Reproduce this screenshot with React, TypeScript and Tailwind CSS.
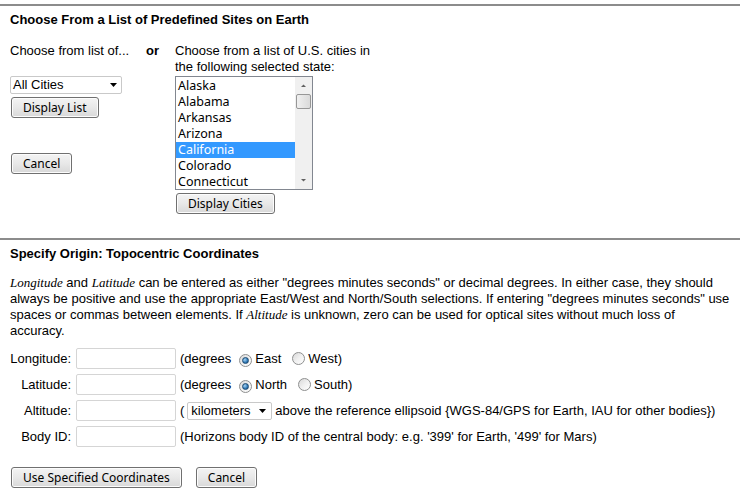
import { useState } from "react";

const states = [
  "Alaska",
  "Alabama",
  "Arkansas",
  "Arizona",
  "California",
  "Colorado",
  "Connecticut",
];

function Button({ label, className = "" }: { label: string; className?: string }) {
  return (
    <button
      type="button"
      className={`h-[21px] rounded-[3px] border border-[#707070] bg-gradient-to-b from-[#f4f4f4] via-[#e8e8e8] to-[#d8d8d8] px-[11px] font-['Noto_Sans',sans-serif] text-[12px] leading-[16px] text-black shadow-[inset_0_0_0_1px_#fcfcfc] ${className}`}
    >
      {label}
    </button>
  );
}

function Radio({ checked }: { checked?: boolean }) {
  return (
    <span className="mx-[3px] inline-flex h-[13px] w-[13px] items-center justify-center rounded-full border border-[#8e8f8f] bg-gradient-to-br from-[#d8d8d8] via-[#f0f0f0] to-[#ffffff] align-[-2px]">
      {checked && (
        <span className="h-[7px] w-[7px] rounded-full border border-[#1c4a72] bg-[radial-gradient(circle_at_35%_35%,#a6d3f5,#2f78b4_60%,#1d4d7a)]" />
      )}
    </span>
  );
}

function TextBox() {
  return (
    <input
      type="text"
      className="h-[21px] w-[100px] rounded-[2px] border border-[#d5d5d5] bg-white px-1 text-[13px] outline-none"
    />
  );
}

function DropArrow() {
  return (
    <svg width="8" height="4" viewBox="0 0 8 4" className="shrink-0">
      <path d="M0 0h7L3.5 4z" fill="#000" />
    </svg>
  );
}

export default function App() {
  const [selected, setSelected] = useState("California");

  return (
    <div className="min-h-[504px] w-[747px] bg-white pt-[4px] font-['Liberation_Sans',Arial,sans-serif] text-[13px] leading-[16px] text-black">
      <div className="mr-[7px] border-t-2 border-[#8c8c8c]" />

      {/* Predefined sites */}
      <div className="px-[10px]">
        <h2 className="mt-[6px] font-bold">Choose From a List of Predefined Sites on Earth</h2>

        <div className="mt-[15px] grid grid-cols-[136px_29px_auto]">
          <div>Choose from list of...</div>
          <div className="font-bold">or</div>
          <div>
            Choose from a list of U.S. cities in
            <br />
            the following selected state:
          </div>

          <div className="pt-px">
            <div className="flex h-[18px] w-[112px] items-center justify-between rounded-[2px] border border-[#c9c9c9] bg-white pl-[2px] pr-[3px]">
              <span>All Cities</span>
              <DropArrow />
            </div>
            <Button label="Display List" className="mt-[3px] ml-px" />
            <Button label="Cancel" className="mt-[35px] ml-px block h-[20px]" />
          </div>
          <div />
          <div className="pt-px">
            <div className="flex h-[114px] w-[138px] border border-[#828790] bg-white">
              <ul className="flex-1 pt-px font-['Noto_Sans',sans-serif] text-[12.5px] leading-[16px]">
                {states.map((s) => (
                  <li
                    key={s}
                    onClick={() => setSelected(s)}
                    className={`h-[16px] pl-[2px] ${s === selected ? "bg-[#3399ff] text-white" : ""}`}
                  >
                    {s}
                  </li>
                ))}
              </ul>
              {/* scrollbar */}
              <div className="flex w-[17px] flex-col items-center bg-[#f0f0f0]">
                <svg width="17" height="17" viewBox="0 0 17 17">
                  <path d="M6 10h5L8.5 7.5z" fill="#606060" />
                </svg>
                <div className="h-[15px] w-[15px] rounded-[2px] border border-[#979797] bg-gradient-to-r from-[#f0f0f0] to-[#dadada]" />
                <div className="flex-1" />
                <svg width="17" height="17" viewBox="0 0 17 17">
                  <path d="M6 7h5L8.5 9.5z" fill="#606060" />
                </svg>
              </div>
            </div>
            <Button label="Display Cities" className="mt-[3px] ml-px block" />
          </div>
        </div>
      </div>

      <div className="mt-[24px] mr-[7px] border-t-2 border-[#8c8c8c]" />

      {/* Topocentric coordinates */}
      <div className="pl-[10px]">
        <h2 className="mt-[6px] font-bold">Specify Origin: Topocentric Coordinates</h2>

        <p className="mt-[13px] w-[721px]">
          <i className="font-['Liberation_Serif',serif]">Longitude</i> and{" "}
          <i className="font-['Liberation_Serif',serif]">Latitude</i> can be entered as either
          "degrees minutes seconds" or decimal degrees. In either case, they should always be
          positive and use the appropriate East/West and North/South selections. If entering
          "degrees minutes seconds" use spaces or commas between elements. If{" "}
          <i className="font-['Liberation_Serif',serif]">Altitude</i> is unknown, zero can be used
          for optical sites without much loss of accuracy.
        </p>

        <div className="mt-[9px] flex flex-col gap-[5px]">
          <div className="flex items-center">
            <span className="w-[62px] pr-px text-right">Longitude:</span>
            <span className="ml-[4px]"><TextBox /></span>
            <span className="ml-[4px] flex items-center">
              (degrees
              <span className="ml-[5px]"><Radio checked /></span>East
              <span className="ml-[8px]"><Radio /></span>West)
            </span>
          </div>
          <div className="flex items-center">
            <span className="w-[62px] pr-px text-right">Latitude:</span>
            <span className="ml-[4px]"><TextBox /></span>
            <span className="ml-[4px] flex items-center">
              (degrees
              <span className="ml-[5px]"><Radio checked /></span>North
              <span className="ml-[8px]"><Radio /></span>South)
            </span>
          </div>
          <div className="flex items-center">
            <span className="w-[62px] pr-px text-right">Altitude:</span>
            <span className="ml-[4px]"><TextBox /></span>
            <span className="ml-[4px] flex items-center">
              (
              <span className="mx-[3px] flex h-[18px] w-[85px] items-center justify-between rounded-[2px] border border-[#c9c9c9] bg-white pl-[3px] pr-[4px]">
                <span>kilometers</span>
                <DropArrow />
              </span>
              above the reference ellipsoid {"{"}WGS-84/GPS for Earth, IAU for other bodies{"}"})
            </span>
          </div>
          <div className="flex items-center">
            <span className="w-[62px] pr-px text-right">Body ID:</span>
            <span className="ml-[4px]"><TextBox /></span>
            <span className="ml-[4px]">
              (Horizons body ID of the central body: e.g. '399' for Earth, '499' for Mars)
            </span>
          </div>
        </div>

        <div className="mt-[20px] flex gap-[14px] pl-px">
          <Button label="Use Specified Coordinates" />
          <Button label="Cancel" />
        </div>
      </div>
    </div>
  );
}
